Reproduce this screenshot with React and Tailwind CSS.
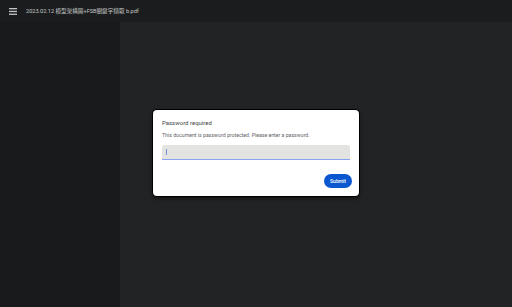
export default function App() {
  return (
    <div className="w-[512px] h-[307px] flex flex-col bg-[#222324] overflow-hidden font-['Roboto','Noto_Sans_CJK_SC',sans-serif]">
      <div className="h-[22px] shrink-0 flex items-center bg-[#1b1c1e] pl-[9px]">
        <svg width="8" height="7" viewBox="0 0 8 7" className="shrink-0">
          <rect x="0" y="0" width="8" height="1.3" fill="#c4c7c5" />
          <rect x="0" y="2.8" width="8" height="1.3" fill="#c4c7c5" />
          <rect x="0" y="5.6" width="8" height="1.3" fill="#c4c7c5" />
        </svg>
        <span className="ml-[9px] text-[5.6px] text-[#c4c7c5] whitespace-nowrap">
          2023.02.12 模型架構圖+FSB關鍵字擷取 b.pdf
        </span>
      </div>
      <div className="flex flex-1">
        <div className="w-[120px] bg-[#191a1b]" />
        <div className="flex-1 bg-[#222324] relative">
          <div className="absolute left-[33px] top-[88px] w-[206px] h-[86px] bg-white rounded-[4px] shadow-[0_0_0_1px_#000,0_2px_4px_rgba(0,0,0,0.6)] px-[9px] pt-[9px]">
            <div className="text-[6px] text-[#444746] leading-[8px]">Password required</div>
            <div className="mt-[5px] text-[5.2px] text-[#5f6368] leading-[7px]">
              This document is password protected. Please enter a password.
            </div>
            <div className="mt-[6px] h-[15px] bg-[#e3e3e1] rounded-t-[3px] border-b border-[#8aa4f0] flex items-center pl-[4px]">
              <div className="w-px h-[6px] bg-[#7b8fe0]" />
            </div>
            <div className="flex justify-end mt-[14px] -mr-[2px]">
              <button className="h-[14px] px-[6px] rounded-full bg-[#0b57d0] text-white text-[5px] font-medium leading-none">
                Submit
              </button>
            </div>
          </div>
        </div>
      </div>
    </div>
  );
}
